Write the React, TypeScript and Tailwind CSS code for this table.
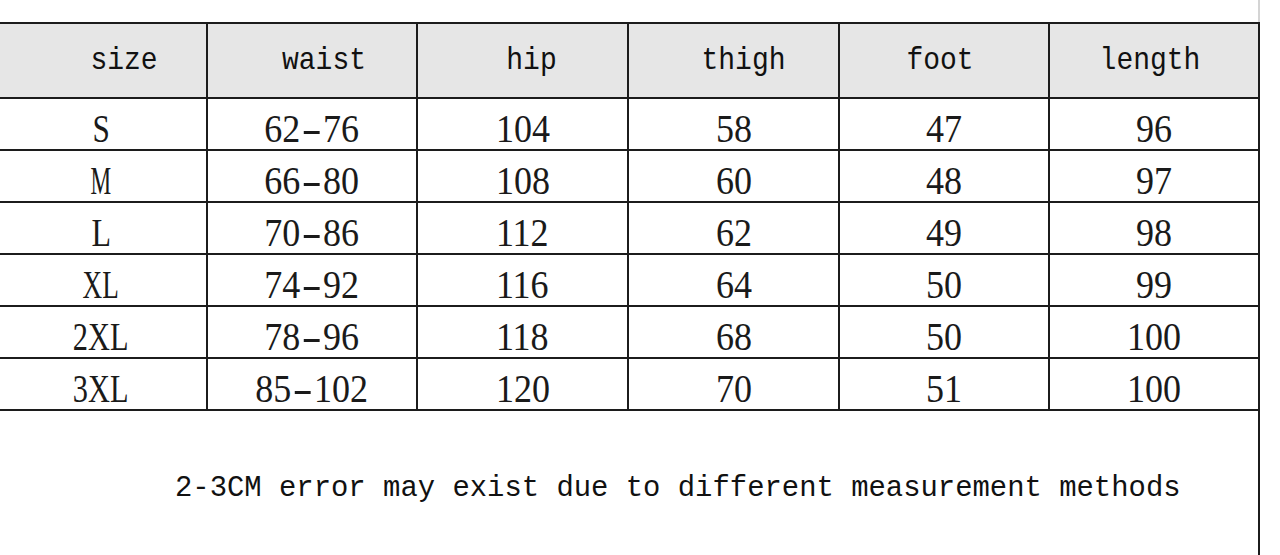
import React from "react";

const headers: { label: string; cls: string }[] = [
  { label: "size", cls: "pl-[46px]" },
  { label: "waist", cls: "pl-[24px]" },
  { label: "hip", cls: "pl-[18px]" },
  { label: "thigh", cls: "pl-[20px]" },
  { label: "foot", cls: "pr-[8px]" },
  { label: "length", cls: "pr-[8px]" },
];

const sizeScale: Record<string, string> = {
  S: "scale-x-[0.78]",
  M: "scale-x-[0.58]",
  L: "scale-x-[0.8]",
  XL: "scale-x-[0.68]",
  "2XL": "scale-x-[0.76]",
  "3XL": "scale-x-[0.76]",
};

const rows: string[][] = [
  ["S", "62-76", "104", "58", "47", "96"],
  ["M", "66-80", "108", "60", "48", "97"],
  ["L", "70-86", "112", "62", "49", "98"],
  ["XL", "74-92", "116", "64", "50", "99"],
  ["2XL", "78-96", "118", "68", "50", "100"],
  ["3XL", "85-102", "120", "70", "51", "100"],
];

function Value({ text }: { text: string }) {
  if (text.includes("-")) {
    const [a, b] = text.split("-");
    return (
      <>
        {a}
        <span className="inline-block scale-x-[1.7] mx-[6px]">-</span>
        {b}
      </>
    );
  }
  return <>{text}</>;
}

export default function App() {
  return (
    <div className="w-[1280px] h-[555px] bg-white overflow-hidden">
      <div className="w-[1264px] ml-[-4px] flex flex-col">
        <div className="h-[22px] border-r-2 border-[#d4d4d4]" />
        <div className="grid grid-cols-[212px_210px_211px_211px_210px_210px] border-t-2 border-[#1c1c1c] text-[#141414]">
          {headers.map((h) => (
            <div
              key={h.label}
              className={`h-[75px] bg-[#e6e6e6] border-r-2 border-b-2 border-[#1c1c1c] flex items-center justify-center ${h.cls}`}
            >
              <span className="inline-block scale-y-[1.1] text-[28px] leading-[28px] font-['Liberation_Mono',monospace] text-[#111]">
                {h.label}
              </span>
            </div>
          ))}
          {rows.map((r) =>
            r.map((c, i) => (
              <div
                key={r[0] + i}
                className="h-[52px] border-r-2 border-b-2 border-[#1c1c1c] flex justify-center pt-[10px]"
              >
                <span
                  className={`inline-block text-[40px] leading-[40px] font-['Liberation_Serif',serif] text-[#1a1a1a] ${
                    i === 0 ? sizeScale[c] : "scale-x-[0.9]"
                  }`}
                >
                  <Value text={c} />
                </span>
              </div>
            ))
          )}
        </div>
        <div className="h-[145px] border-r-2 border-[#1c1c1c] pt-[63px] pl-[179px]">
          <p className="text-[28.9px] leading-[29px] whitespace-pre font-['Liberation_Mono',monospace] text-[#111]">
            2-3CM error may exist due to different measurement methods
          </p>
        </div>
      </div>
    </div>
  );
}
